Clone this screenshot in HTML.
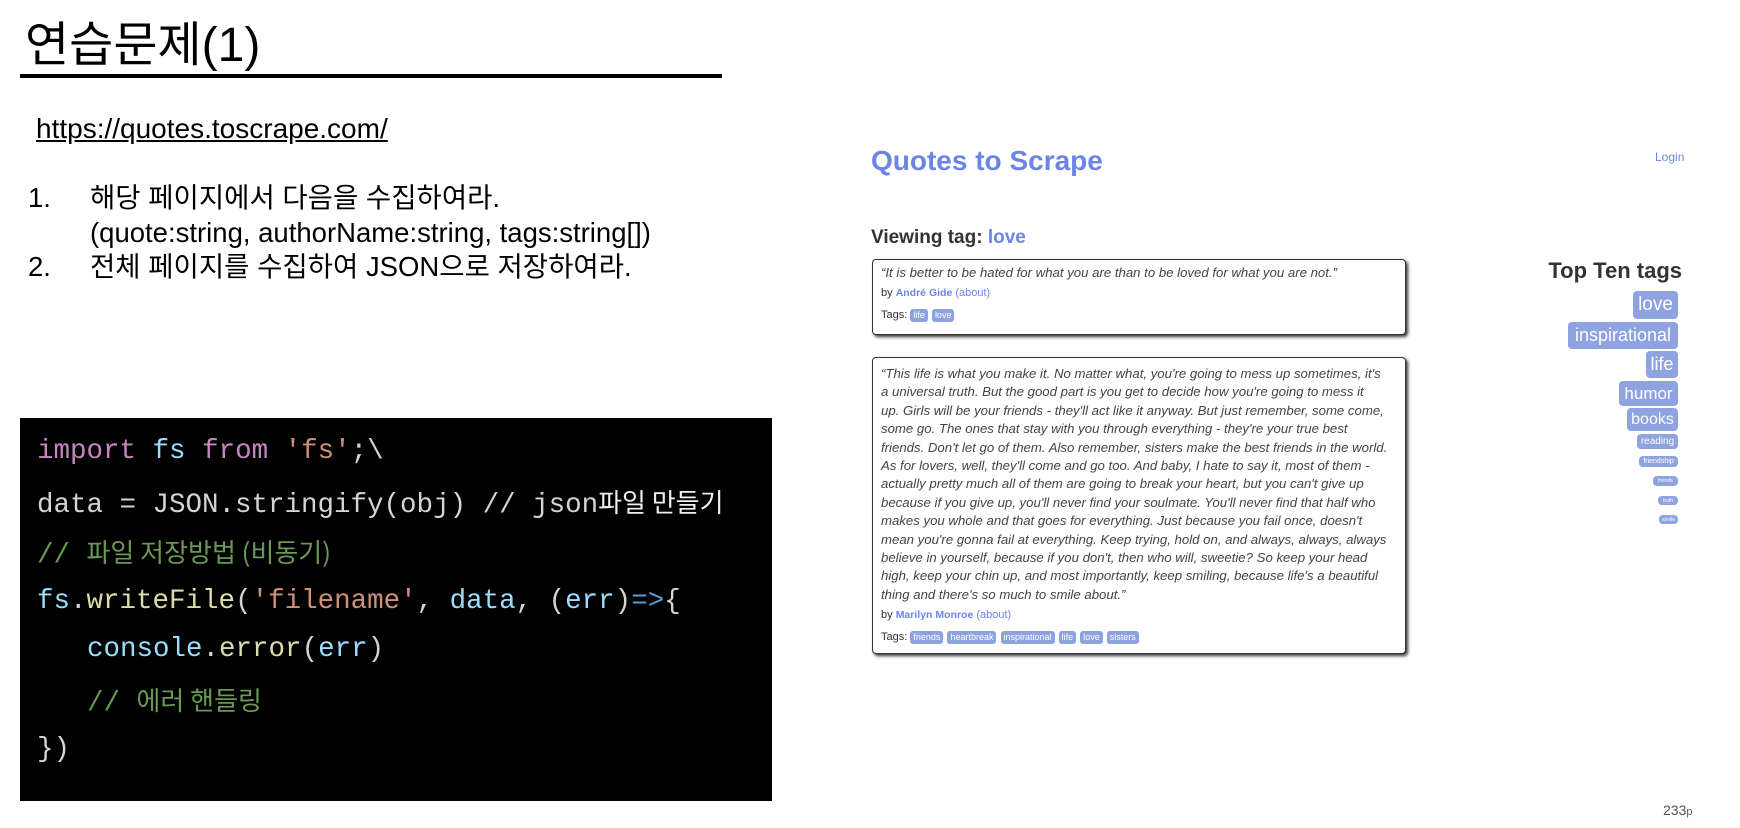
<!DOCTYPE html>
<html><head><meta charset="utf-8"><style>
*{margin:0;padding:0;box-sizing:border-box}
body{width:1740px;height:828px;background:#fff;position:relative;overflow:hidden;font-family:"Liberation Sans","Noto Sans CJK KR",sans-serif;color:#000}
.abs{position:absolute;white-space:nowrap}
.code{position:absolute;left:20px;top:418px;width:752px;height:383px;background:#000}
.cl{position:absolute;left:17px;font-family:"Liberation Mono","Noto Sans CJK KR",monospace;font-size:27.5px;color:#d4d4d4;white-space:nowrap;line-height:34px}
.k{color:#c586c0}.v{color:#9cdcfe}.s{color:#ce9178}.c{color:#6a9955}.f{color:#dcdcaa}.ko{font-family:"Noto Sans CJK KR",sans-serif;font-size:26px}
.blue{color:#6b84e6}
.box{position:absolute;left:872px;width:534px;border:1px solid #333;border-radius:4px;box-shadow:2px 2px 3px #333;background:#fff;padding:4px 8px;color:#333}
.q{font-style:italic;font-size:13.2px;line-height:18.4px;white-space:nowrap;color:#444}
.by{font-size:11px;line-height:22px}
.by b{color:#6b84e6;font-size:10.5px}
.tg{font-size:11px;line-height:22px}
.t{display:inline-block;background:#8ca3e0;color:#fff;font-size:9px;padding:1px 3px;border-radius:3px;margin-right:1px;line-height:11px}
.tt{position:absolute;background:#8ea3e0;color:#fff;border-radius:4px;display:flex;align-items:center;justify-content:center;right:62px}
</style></head><body>
<div class="abs" style="left:25px;top:15px;font-size:48px;line-height:62px">연습문제(1)</div>
<div class="abs" style="left:20px;top:74px;width:702px;height:4px;background:#000"></div>
<div class="abs" style="left:36px;top:113px;font-size:28px;line-height:32px;text-decoration:underline">https://quotes.toscrape.com/</div>
<div class="abs" style="left:28px;top:182px;font-size:27.5px;line-height:32px">1.</div>
<div class="abs" style="left:90px;top:182px;font-size:27.5px;line-height:32px">해당 페이지에서 다음을 수집하여라.</div>
<div class="abs" style="left:90px;top:217px;font-size:27.5px;line-height:32px">(quote:string, authorName:string, tags:string[])</div>
<div class="abs" style="left:28px;top:251px;font-size:27.5px;line-height:32px">2.</div>
<div class="abs" style="left:90px;top:251px;font-size:27.5px;line-height:32px">전체 페이지를 수집하여 JSON으로 저장하여라.</div>

<div class="code">
<div class="cl" style="top:17px"><span class="k">import</span> <span class="v">fs</span> <span class="k">from</span> <span class="s">'fs'</span>;\</div>
<div class="cl" style="top:67px">data = JSON.stringify(obj) // json<span class="ko" style="color:#eee">파일 만들기</span></div>
<div class="cl c" style="top:117px">// <span class="ko">파일 저장방법 (비동기)</span></div>
<div class="cl" style="top:167px"><span class="v">fs</span>.<span class="f">writeFile</span>(<span class="s">'filename'</span>, <span class="v">data</span>, (<span class="v">err</span>)<span style="color:#569cd6">=&gt;</span>{</div>
<div class="cl" style="top:215px;left:67px"><span class="v">console</span>.<span class="f">error</span>(<span class="v">err</span>)</div>
<div class="cl c" style="top:265px;left:67px">// <span class="ko">에러 핸들링</span></div>
<div class="cl" style="top:315px">})</div>
</div>

<div class="abs blue" style="left:871px;top:144px;font-size:28px;font-weight:bold;line-height:34px">Quotes to Scrape</div>
<div class="abs blue" style="left:1655px;top:150px;font-size:12px">Login</div>
<div class="abs" style="left:871px;top:227px;font-size:19px;font-weight:bold;color:#333">Viewing tag: <span class="blue">love</span></div>

<div class="box" style="top:259px;height:76px">
<div class="q">“It is better to be hated for what you are than to be loved for what you are not.”</div>
<div class="by">by <b>André Gide</b> <span class="blue">(about)</span></div>
<div class="tg">Tags: <span class="t">life</span> <span class="t">love</span></div>
</div>

<div class="box" style="top:357px;height:297px;padding-top:7px">
<div class="q">“This life is what you make it. No matter what, you're going to mess up sometimes, it's<br>a universal truth. But the good part is you get to decide how you're going to mess it<br>up. Girls will be your friends - they'll act like it anyway. But just remember, some come,<br>some go. The ones that stay with you through everything - they're your true best<br>friends. Don't let go of them. Also remember, sisters make the best friends in the world.<br>As for lovers, well, they'll come and go too. And baby, I hate to say it, most of them -<br>actually pretty much all of them are going to break your heart, but you can't give up<br>because if you give up, you'll never find your soulmate. You'll never find that half who<br>makes you whole and that goes for everything. Just because you fail once, doesn't<br>mean you're gonna fail at everything. Keep trying, hold on, and always, always, always<br>believe in yourself, because if you don't, then who will, sweetie? So keep your head<br>high, keep your chin up, and most importantly, keep smiling, because life's a beautiful<br>thing and there's so much to smile about.”</div>
<div class="by">by <b>Marilyn Monroe</b> <span class="blue">(about)</span></div>
<div class="tg">Tags: <span class="t">friends</span> <span class="t">heartbreak</span> <span class="t">inspirational</span> <span class="t">life</span> <span class="t">love</span> <span class="t">sisters</span></div>
</div>

<div class="abs" style="right:58px;top:258px;font-size:22px;font-weight:bold;color:#333">Top Ten tags</div>
<div class="tt" style="top:291px;width:45px;height:28px;font-size:19px">love</div>
<div class="tt" style="top:322px;width:110px;height:27px;font-size:18px">inspirational</div>
<div class="tt" style="top:351px;width:32px;height:27px;font-size:18px">life</div>
<div class="tt" style="top:381px;width:59px;height:25px;font-size:17px">humor</div>
<div class="tt" style="top:408px;width:51px;height:23px;font-size:16px">books</div>
<div class="tt" style="top:434px;width:41px;height:15px;font-size:10px">reading</div>
<div class="tt" style="top:456px;width:39px;height:11px;font-size:7px">friendship</div>
<div class="tt" style="top:476px;width:25px;height:10px;font-size:5px">friends</div>
<div class="tt" style="top:496px;width:20px;height:9px;font-size:5px">truth</div>
<div class="tt" style="top:515px;width:19px;height:9px;font-size:5px">simile</div>

<div class="abs" style="left:1663px;top:802px;font-size:14px;color:#555">233<span style="font-size:11px">p</span></div>
</body></html>
